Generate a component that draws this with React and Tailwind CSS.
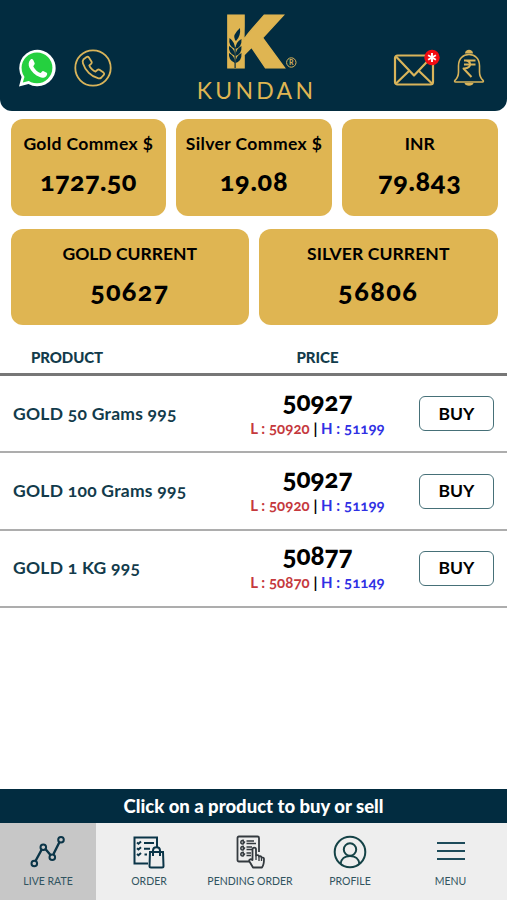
import React from 'react';

const commexRates = [
    { label: 'Gold Commex $', value: '1727.50', labelClass: 'tracking-[0.4px]', valueClass: 'tracking-[0.4px]' },
    { label: 'Silver Commex $', value: '19.08', labelClass: 'tracking-[0.4px]', valueClass: 'tracking-[0.8px]' },
    { label: 'INR', value: '79.843', labelClass: '', valueClass: 'tracking-[0.7px]' },
];

const currentRates = [
    { label: 'GOLD CURRENT', value: '50627', labelClass: '', valueClass: 'tracking-[1.2px]' },
    { label: 'SILVER CURRENT', value: '56806', labelClass: 'tracking-[0.1px]', valueClass: 'tracking-[1.5px]' },
];

const products = [
    { name: 'GOLD 50 Grams 995', price: '50927', low: '50920', high: '51199' },
    { name: 'GOLD 100 Grams 995', price: '50927', low: '50920', high: '51199' },
    { name: 'GOLD 1 KG 995', price: '50877', low: '50870', high: '51149' },
];

const WhatsAppIcon = () => (
    <svg width="38" height="38" viewBox="0 0 38 38">
        <path d="M1 37.5 3.6 28A18.2 18.2 0 1 1 10.5 34.9Z" fill="#fff" />
        <circle cx="19" cy="18.8" r="15.4" fill="#25d03f" />
        <path d="M4.8 33.4 7 26l5.5 5.4Z" fill="#25d03f" />
        <path d="M12.6 10.4c.8-.7 2-.6 2.5.3l1.6 3.6c.3.8-1.4 2.5-1.4 3.1 1.5 3 4 5.3 7 6.5.7.1 2-2.2 2.8-2l3.6 1.8c1 .6.3 2.8-.7 3.7-1.6 1.4-4 1.6-6.2.7-4.6-1.7-8.3-5.2-10.4-9.6-1.2-2.7-1-6 1.2-8.1Z" fill="#fff" />
    </svg>
);

const PhoneIcon = () => (
    <svg width="38" height="38" viewBox="0 0 38 38" fill="none" stroke="#d9b45a" strokeWidth="1.8">
        <circle cx="19" cy="19" r="17.7" />
        <path strokeLinejoin="round" d="M9.6 10.2 12.6 8c.9-.5 1.8-.2 2.3.5l2.7 4.2c.4.8.2 1.6-.5 2.2l-1.8 1.5c.7 2.2 4 5.500 6.200 6.200l1.800-1.600c.700-.600 1.500-.700 2.200-.200l4 2.800c.800.600.900 1.500.300 2.200l-2.400 2.700c-.900.900-2.200 1.100-3.500.700C17.300 27.500 11.200 21.500 9 14.500c-.500-1.700-.400-3.200.600-4.300Z" />
    </svg>
);

const Logo = () => (
    <svg width="76" height="58" viewBox="0 0 76 58" className="overflow-visible">
        <text x="-2" y="55.7" fontFamily="Inter" fontWeight="900" fontSize="73.5" fill="#dfb552" stroke="#dfb552" strokeWidth="1.2" textLength="62.5" lengthAdjust="spacingAndGlyphs">K</text>
        {/* Wheat ear over the stem */}
        <g fill="#022c40">
            <path d="M8.5 56V35h1.2v21Z" />
            <path d="M9 28q-3-5 5-12 1 8-4 13ZM9 37Q2 34 3.5 26 9 30 9 37ZM9.5 37q0-7 6-10 .5 8-6 10ZM9 44q-7-3-6-10 6 3 6 10ZM9.5 44q0-7 6-10 .5 8-6 10ZM9 51q-7-3-6-10 6 3 6 10ZM9.5 51q0-7 6-10 .5 8-6 10Z" />
        </g>
        <circle cx="65.300" cy="50.5" r="4.7" fill="none" stroke="#d9b45a" />
        <text x="65.300" y="53.1" textAnchor="middle" fontFamily="Lato" fontWeight="700" fontSize="7" fill="#d9b45a">R</text>
    </svg>
);

const MailIcon = () => (
    <svg width="48" height="38" viewBox="0 0 48 38" fill="none" stroke="#d9b45a" strokeWidth="2.2" strokeLinejoin="round">
        <rect x="2" y="6.5" width="38" height="29" rx="2.5" />
        <path d="m3 7.5 18 19 18-19M3 34.5l13.5-13m22.500 13-13.500-13" />
        <circle cx="39" cy="8.5" r="7.7" fill="#f30c12" stroke="none" />
        <path d="M39 4v9m-3.900-6.800 7.800 4.600m0-4.600-7.800 4.600" stroke="#fff" strokeWidth="1.9" />
    </svg>
);

const BellIcon = () => (
    <svg width="32" height="38" viewBox="0 0 32 38" fill="none" stroke="#d9b45a" strokeWidth="1.6" strokeLinejoin="round">
        <path d="M12 4.5c0-5 8-5 8 0ZM11.5 34h9c-.5 3.5-8.5 3.5-9 0Z" fill="#d9b45a" stroke="none" />
        <path d="M5.5 17C5.5 9.500 10 5.500 16 5.500S26.500 9.500 26.500 17v6c0 3.500 1.500 6.500 3.500 8.300.700.700.500 1.700-.500 1.700H2.500c-1 0-1.200-1-.500-1.700C4 29.500 5.500 26.500 5.500 23Z" />
        <path d="M11 11.500h11.500m-11.500 4h11.500m-11-4c7-1 8 8 0 8h-1l8 8.500" strokeWidth="2" />
    </svg>
);

const LiveRateIcon = () => (
    <svg width="36" height="32" viewBox="0 0 36 32" fill="none" stroke="#0b3548" strokeWidth="2">
        <path d="m5.500 25 6.500-12m3-.500 5.500 6.500m3-1L29.500 6" strokeWidth="2.4" />
        <circle cx="4.3" cy="27.5" r="2.8" />
        <circle cx="13.3" cy="11.3" r="2.8" />
        <circle cx="22.3" cy="21.3" r="2.8" />
        <circle cx="31" cy="3.8" r="2.8" />
    </svg>
);

const OrderIcon = () => (
    <svg width="32" height="33" viewBox="0 0 32 33" fill="none" stroke="#0b3548" strokeWidth="2">
        <path d="M15 27.500H1.500v-26H24V12M11 7H21M11 12.700h6M11.500 18.500H14" />
        <path d="m4 6.500 1.500 1.200L8 5.500m-4 6.700 1.500 1.200L8 11.200M4 18l1.500 1.200L8 17" strokeWidth="2" />
        <path d="M17 16h13l.500 14c0 1-.500 1.500-1.500 1.500H18c-1 0-1.500-.500-1.500-1.500ZM20 20v-5.500c0-4.500 7-4.500 7 0V20" />
    </svg>
);

const PendingIcon = () => (
    <svg width="29" height="34" viewBox="0 0 29 34" fill="none" stroke="#343a3f" strokeWidth="1.8" strokeLinejoin="round">
        <path d="M14 26.500H3c-1 0-1.500-.500-1.500-1.500V3c0-1 .500-1.500 1.500-1.500h18.500c1 0 1.500.500 1.500 1.500v14" />
        <path d="M10.500 6H18m-7.500 2.500H20M10.500 12H16m-5.500 2.500H17M10.500 18H15m-4.500 2.500H15" strokeWidth="1.6" />
        <path d="M8 5.500c-4-1-4 4-1 3.500l1.500-2H6.500M8 11.500c-4-1-4 4-1 3.500l1.500-2H6.500M8 17.500c-4-1-4 4-1 3.500l1.500-2H6.500" strokeWidth="1.6" />
        <path d="M16.500 25V14.500c0-2.500 3.500-2.500 3.500 0v6c2-1 3 0 3 1 1.500-.700 2.500 0 2.500 1 1.500-.300 2.500.500 2.500 1.500 0 3.500-.500 6.500-2 8.500h-9l-3.500-6c-1-2 1-3 3-1.500Z" fill="#eee" />
        <path d="M20 20.500V25m3-3.500V26m2.500-3.500V26" strokeWidth="1.3" />
    </svg>
);

const ProfileIcon = () => (
    <svg width="34" height="34" viewBox="0 0 34 34" fill="none" stroke="#144246" strokeWidth="2">
        <circle cx="17" cy="17" r="15.3" />
        <circle cx="17" cy="14.5" r="6.2" />
        <path d="M7.500 29c.500-5 4.500-8 9.500-8s9 3 9.500 8" />
    </svg>
);

const MenuIcon = () => (
    <svg width="28" height="20" viewBox="0 0 28 20" fill="none" stroke="#1d4b5a" strokeWidth="2">
        <path d="M0 1h28M0 9h28M0 17h28" />
    </svg>
);

const tabs = [
    { label: 'LIVE RATE', icon: LiveRateIcon, className: 'w-[96px] bg-[#c7c7c7]' },
    { label: 'ORDER', icon: OrderIcon, className: 'w-[106px]' },
    { label: 'PENDING ORDER', icon: PendingIcon, className: 'w-[96px]' },
    { label: 'PROFILE', icon: ProfileIcon, className: 'w-[104px]' },
    { label: 'MENU', icon: MenuIcon, className: 'w-[97px]' },
];

const RateCard = ({ label, value, labelClass, valueClass }) => (
    <div className="flex-1 rounded-xl bg-[#dfb552] flex flex-col items-center pt-[13px] text-black whitespace-nowrap">
        <span className={`text-[17.5px] leading-6 font-bold ${labelClass}`}>{label}</span>
        <span className={`mt-[9px] text-[27px] leading-8 font-black oldstyle-nums ${valueClass}`}>{value}</span>
    </div>
);

const ProductRow = ({ name, price, low, high }) => (
    <div className="h-[77.4px] flex items-center border-b-2 border-[#adadad] pr-[13px]">
        <div className="w-[224px] pl-[13px] text-[17.5px] tracking-[0.25px] font-bold text-[#123b4b] oldstyle-nums whitespace-nowrap">{name}</div>
        <div className="w-[187px] pb-0.5 flex flex-col items-center oldstyle-nums">
            <span className="text-[26px] leading-[31px] font-black text-black">{price}</span>
            <div className="text-[15px] leading-[23px] tracking-[0.05px] font-bold whitespace-pre text-black">
                <span className="text-[#c5393d]">L : {low}</span> | <span className="text-[#3030e4]">H : {high}</span>
            </div>
        </div>
        <button className="ml-2 w-[75px] h-[35px] rounded-md border-[1.5px] border-[#467078] text-[17.5px] font-bold text-black">BUY</button>
    </div>
);

const App = () => (
    <div className="w-[507px] h-[900px] flex flex-col bg-white overflow-hidden font-['Lato',sans-serif]">
        <header className="h-[111px] shrink-0 rounded-b-xl bg-[#022c40] flex">
            <div className="w-[195px] pl-[18px] pt-[49px] flex gap-[18px]">
                <WhatsAppIcon />
                <PhoneIcon />
            </div>
            <div className="w-[120px] pt-3 flex flex-col items-center">
                <div className="pl-[17px]"><Logo /></div>
                <span className="mt-2 pl-[3px] text-[23px] leading-6 tracking-[3.3px] text-[#dfb552]">KUNDAN</span>
            </div>
            <div className="flex-1 pl-[78px] pt-[49px] flex gap-3">
                <MailIcon />
                <BellIcon />
            </div>
        </header>

        <section className="pt-2 pl-[10.5px] pr-[9.5px] flex flex-col gap-[13px]">
            <div className="h-[97px] flex gap-2.5">
                {commexRates.map((rate) => <RateCard key={rate.label} {...rate} />)}
            </div>
            <div className="h-[96px] flex gap-2.5">
                {currentRates.map((rate) => <RateCard key={rate.label} {...rate} />)}
            </div>
        </section>

        <main className="flex-1">
            <div className="h-[51px] pt-[21px] border-b-[3px] border-[#777] flex text-[15px] font-black text-[#123b4b]">
                <span className="w-[224px] pl-[31px] tracking-[-0.1px]">PRODUCT</span>
                <span className="w-[187px] text-center">PRICE</span>
            </div>
            {products.map((product) => <ProductRow key={product.name} {...product} />)}
        </main>

        <div className="h-[34px] pt-px flex items-center justify-center bg-[#022c40] text-white text-[18.5px] font-black">
            Click on a product to buy or sell
        </div>
        <nav className="h-[77px] flex bg-[#eee]">
            {tabs.map((tab) => (
                <button key={tab.label} className={`flex flex-col items-center pt-2.5 ${tab.className}`}>
                    <span className="h-[38px] flex items-center"><tab.icon /></span>
                    <span className="text-[10.5px] leading-5 whitespace-nowrap text-[#31545f]">{tab.label}</span>
                </button>
            ))}
        </nav>
    </div>
);

export default App;
